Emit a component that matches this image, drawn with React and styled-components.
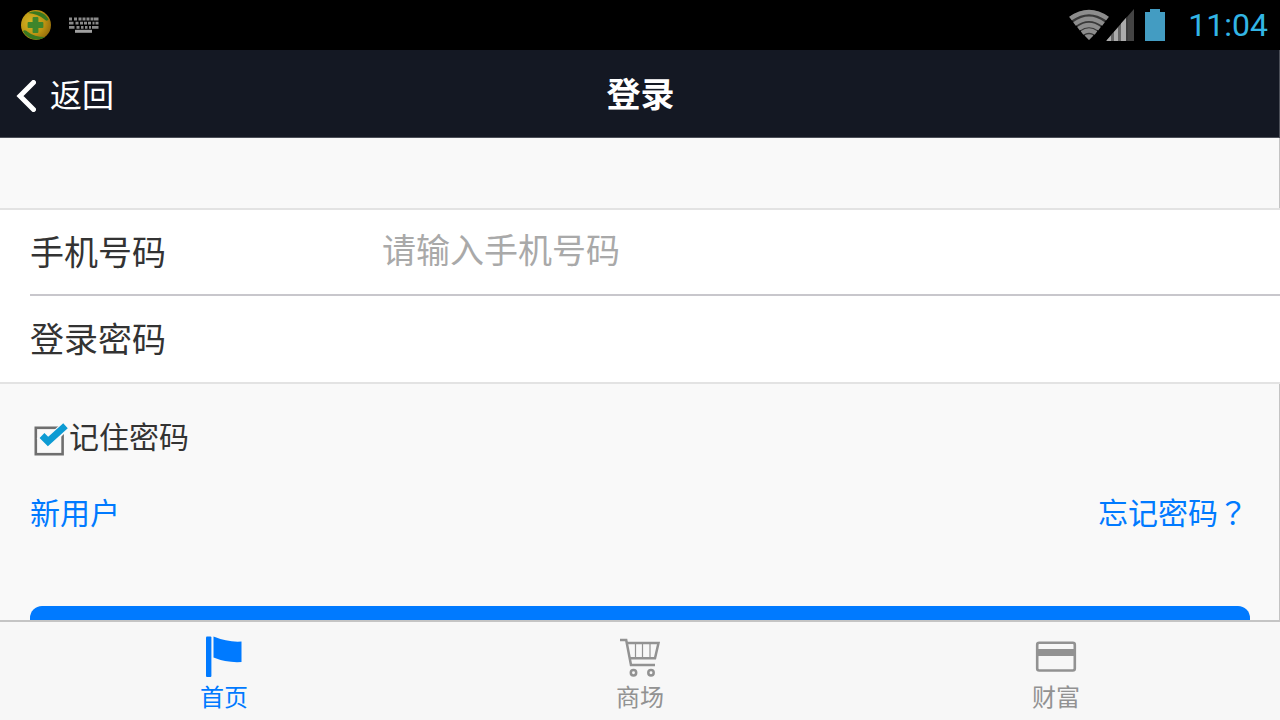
import React, { useState } from 'react';

import styled, { createGlobalStyle } from 'styled-components';

const GlobalStyle = createGlobalStyle`
    * {
        box-sizing: border-box;
    }

    body {
        margin: 0;
        background-color: #f9f9f9;
        color: #333;
        font-family: Roboto, 'Noto Sans CJK SC', sans-serif;
    }

    button, input {
        font-family: inherit;
    }
`;

const Page = styled.div`
    display: flex;
    flex-direction: column;
    height: 100vh;
`;

const StatusBar = styled.div`
    display: flex;
    align-items: center;
    justify-content: space-between;
    flex: none;
    height: 50px;
    padding: 0 12px 0 20px;
    background-color: #000;
`;

const StatusGroup = styled.div`
    display: flex;
    align-items: center;
    gap: ${({ $gap }) => $gap}px;
`;

const Signal = styled.svg`
    margin-left: -3px;
    margin-right: 10px;
`;

const Clock = styled.time`
    margin-left: 22px;
    color: #33b5e5;
    font-size: 32px;
    line-height: 48px;
`;

const Header = styled.header`
    display: grid;
    grid-template-columns: 1fr auto 1fr;
    align-items: center;
    flex: none;
    height: 88px;
    padding: 0 14px 0 16px;
    border-right: 1px solid #4c4f58;
    border-bottom: 1px solid #4c4f58;
    background-color: #141823;
    color: #fff;
`;

const BackButton = styled.button`
    display: flex;
    align-items: center;
    justify-self: start;
    gap: 14px;
    padding: 4px 0 0;
    border: 0;
    background: none;
    color: inherit;
    font-size: 32px;
    line-height: 44px;
    cursor: pointer;
`;

const Title = styled.h1`
    margin: 0;
    padding-top: 2px;
    font-size: 34px;
    font-weight: 700;
    line-height: 48px;
`;

const Content = styled.main`
    flex: 1;
    min-height: 0;
    overflow-y: auto;
    scrollbar-width: none;
    background-image: linear-gradient(#c4c4c4, #c4c4c4);
    background-position: right;
    background-size: 1px 100%;
    background-repeat: no-repeat;
`;

const FieldList = styled.div`
    margin-top: 70px;
    padding-left: 30px;
    border-top: 2px solid #e3e3e3;
    border-bottom: 2px solid #e3e3e3;
    background-color: #fff;
`;

const Field = styled.div`
    display: grid;
    grid-template-columns: 28% 1fr;
    align-items: center;
    height: 84px;

    & + & {
        border-top: 2px solid #c8c7cc;
        height: 88px;
    }
`;

const FieldLabel = styled.label`
    padding-top: 2px;
    font-size: 34px;
    line-height: 48px;
`;

const FieldInput = styled.input`
    width: 100%;
    height: 80px;
    padding: 0 0 2px 2px;
    border: 0;
    outline: 0;
    background: none;
    color: #333;
    font-size: 34px;

    &::placeholder {
        color: #a9a9a9;
        opacity: 1;
    }
`;

const Options = styled.div`
    padding: 32px 32px 0 30px;
`;

const Remember = styled.label`
    display: inline-flex;
    align-items: center;
    font-size: 30px;
    line-height: 44px;
    cursor: pointer;
`;

const RememberBox = styled.input`
    appearance: none;
    width: 0;
    height: 0;
    margin: 0;

    &:focus-visible + svg {
        outline: 2px solid #007aff;
    }

    &:not(:checked) + svg .tick {
        display: none;
    }
`;

const Links = styled.nav`
    display: flex;
    justify-content: space-between;
    height: 44px;
    margin-top: 32px;
`;

const TextLink = styled.a`
    display: flex;
    color: #007aff;
    font-size: 30px;
    line-height: 44px;
    text-decoration: none;
`;

const CenteredMark = styled.span`
    font-family: Roboto, 'Noto Sans CJK TC', sans-serif;
`;

const SubmitButton = styled.button`
    display: block;
    width: calc(100% - 60px);
    height: 88px;
    margin: 70px 30px 30px;
    border: 0;
    border-radius: 12px;
    background-color: #007aff;
    color: #fff;
    font-size: 34px;
    cursor: pointer;
`;

const TabBar = styled.nav`
    display: flex;
    flex: none;
    height: 100px;
    padding: 0 16px;
    border-top: 2px solid #c4c4c4;
    background-color: #f7f7f7;
`;

const Tab = styled.a`
    display: flex;
    flex: 1;
    flex-direction: column;
    align-items: center;
    padding-top: 12px;
    color: ${({ $active }) => ($active ? '#007aff' : '#929292')};
    font-size: 24px;
    line-height: 32px;
    text-decoration: none;
`;

function ShieldIcon() {
    return (
        <svg width="32" height="32" viewBox="0 0 32 32" aria-hidden="true">
            <defs>
                <radialGradient id="shieldBall" cx="0.35" cy="0.4" r="0.7">
                    <stop offset="0" stopColor="#d3b624" />
                    <stop offset="0.6" stopColor="#bd9413" />
                    <stop offset="1" stopColor="#946c0a" />
                </radialGradient>
            </defs>
            <circle cx="16" cy="16" r="15" fill="url(#shieldBall)" />
            <path d="M8 4A15 15 0 0 1 28.500 10.500Q27 13 24 10Q18 5 8 4Z" fill="#397820" />
            <path d="M3 22Q5 20 8 23Q14 28 25 28A15 15 0 0 1 3 22Z" fill="#397820" />
            <path d="M13.500 9h4v5h5v4h-5v5h-4v-5h-5V14h5z" fill="#3f852b" stroke="#3f852b" strokeWidth="1.800" strokeLinejoin="round" />
        </svg>
    );
}

function KeyboardIcon() {
    return (
        <svg width="30" height="18" viewBox="0 0 30 18" fill="none" stroke="#8a8a8a" aria-hidden="true">
            <path d="M0 3h3M5 3h3M9.500 3h3M13.500 3h3M17.500 3h3M21.500 3h3M25 3h4.500" strokeWidth="3" />
            <path d="M0 7.200h4.500M6.500 7.200h3M11 7.200h3M15 7.200h3M19 7.200h3M23.500 7.200h2M26.500 7.200h3" strokeWidth="2.800" />
            <path d="M0 11.300h5.500M7.500 11.300h3M12 11.300h2.500M16 11.300h2.500M20 11.300h2M23 11.300h6.500" strokeWidth="2.800" />
            <path d="M6 15.300h17" stroke="#a0a0a0" strokeWidth="3" />
        </svg>
    );
}

function WifiIcon() {
    return (
        <svg width="40" height="32" viewBox="0 0 40 32" aria-hidden="true">
            <path d="M0 8Q20-6 40 8L20 31Z" fill="#393939" />
            <g fill="none" stroke="#8d8d8d" strokeWidth="4.400">
                <path d="M1.500 9.500Q20-3.500 38.500 9.500" />
                <path d="M5.500 15Q20 4.500 34.500 15" />
                <path d="M9.500 19.800Q20 12 30.500 19.800" />
                <path d="M13 24Q20 19 27 24" />
            </g>
            <path d="M15.500 26.500Q20 24 24.500 26.500L20 31Z" fill="#8d8d8d" />
        </svg>
    );
}

function SignalIcon() {
    return (
        <Signal width="28" height="32" viewBox="0 0 28 32" aria-hidden="true">
            <path d="M0 32L28 0V32Z" fill="#444" />
            <path d="M0 32L20 9V32Z" fill="#666" />
            <path d="M1 31L5 26.500V32H1ZM8 23L12 18.500V32H8ZM15 14.500L20 9V32h-5Z" fill="#ababab" />
            <path d="M21 8V32" stroke="#383838" strokeWidth="1.500" />
        </Signal>
    );
}

function BatteryIcon() {
    return (
        <svg width="22" height="32" viewBox="0 0 22 32" aria-hidden="true">
            <path d="M6 0h10v3h5v29H1V3h5z" fill="#439cc2" />
        </svg>
    );
}

function BackIcon() {
    return (
        <svg width="20" height="32" viewBox="0 0 20 32" fill="none" stroke="#fff" strokeWidth="5" aria-hidden="true">
            <path d="M17.500 2.500L4 16L17.500 29.500" strokeLinecap="round" />
        </svg>
    );
}

function CheckIcon() {
    return (
        <svg width="39" height="36" viewBox="0 0 39 36" fill="none" aria-hidden="true">
            <rect x="5.800" y="7.800" width="26.800" height="26.400" fill="#f9f9f9" stroke="#6f6f6f" strokeWidth="2.600" />
            <g className="tick">
                <path d="M10 15L18 22.500L36.500 5" stroke="#f9f9f9" strokeWidth="9.500" />
                <path d="M12 15.500L18 21.500L35.500 5.800" stroke="#0d9bd3" strokeWidth="6.800" />
            </g>
        </svg>
    );
}

function FlagIcon() {
    return (
        <svg width="44" height="48" viewBox="0 0 44 48" fill="currentColor" aria-hidden="true">
            <rect x="4" y="2.500" width="5.400" height="40.500" rx="1" />
            <path d="M11.500 2.500Q26 8.500 39.500 7.500V28Q25 29 11.500 23.500Z" />
        </svg>
    );
}

function CartIcon() {
    return (
        <svg width="44" height="48" viewBox="0 0 44 48" fill="none" stroke="currentColor" strokeWidth="2.500" aria-hidden="true">
            <path d="M2 6H8.200L13 31H37" />
            <path d="M9 9H40.500L37 24.300H12" />
            <path d="M17.500 9V24M24.500 9V24M32 9V24" strokeWidth="1.200" />
            <circle cx="15.500" cy="38.800" r="2.700" />
            <circle cx="33" cy="38.800" r="2.700" />
        </svg>
    );
}

function CardIcon() {
    return (
        <svg width="44" height="48" viewBox="0 0 44 48" fill="none" stroke="currentColor" aria-hidden="true">
            <rect x="3.200" y="8.700" width="37.600" height="27.800" rx="2" strokeWidth="2.600" />
            <path d="M3 18.500H41" strokeWidth="7" />
        </svg>
    );
}

/**
 * Login screen with the device status bar, the form and the bottom tabs.
 * @returns {JSX.Element}
 * @constructor
 */
export default function App() {
    const [remember, setRemember] = useState(true);

    return (
        <>
            <GlobalStyle />
            <Page lang="zh-CN">
                <StatusBar>
                    <StatusGroup $gap={17}>
                        <ShieldIcon />
                        <KeyboardIcon />
                    </StatusGroup>
                    <StatusGroup $gap={0}>
                        <WifiIcon />
                        <SignalIcon />
                        <BatteryIcon />
                        <Clock>11:04</Clock>
                    </StatusGroup>
                </StatusBar>

                <Header>
                    <BackButton type="button">
                        <BackIcon />
                        返回
                    </BackButton>
                    <Title>登录</Title>
                </Header>

                <Content>
                    <form onSubmit={(e) => e.preventDefault()}>
                        <FieldList>
                            <Field>
                                <FieldLabel htmlFor="phone">手机号码</FieldLabel>
                                <FieldInput id="phone" type="tel" placeholder="请输入手机号码" />
                            </Field>
                            <Field>
                                <FieldLabel htmlFor="password">登录密码</FieldLabel>
                                <FieldInput id="password" type="password" />
                            </Field>
                        </FieldList>

                        <Options>
                            <Remember>
                                <RememberBox
                                    type="checkbox"
                                    checked={remember}
                                    onChange={(e) => setRemember(e.target.checked)}
                                />
                                <CheckIcon />
                                记住密码
                            </Remember>
                            <Links>
                                <TextLink href="#register">新用户</TextLink>
                                <TextLink href="#forgot">
                                    忘记密码<CenteredMark lang="zh-TW">？</CenteredMark>
                                </TextLink>
                            </Links>
                        </Options>

                        <SubmitButton type="submit" aria-label="登录" />
                    </form>
                </Content>

                <TabBar>
                    <Tab href="#home" $active>
                        <FlagIcon />
                        首页
                    </Tab>
                    <Tab href="#mall">
                        <CartIcon />
                        商场
                    </Tab>
                    <Tab href="#wealth">
                        <CardIcon />
                        财富
                    </Tab>
                </TabBar>
            </Page>
        </>
    );
}
